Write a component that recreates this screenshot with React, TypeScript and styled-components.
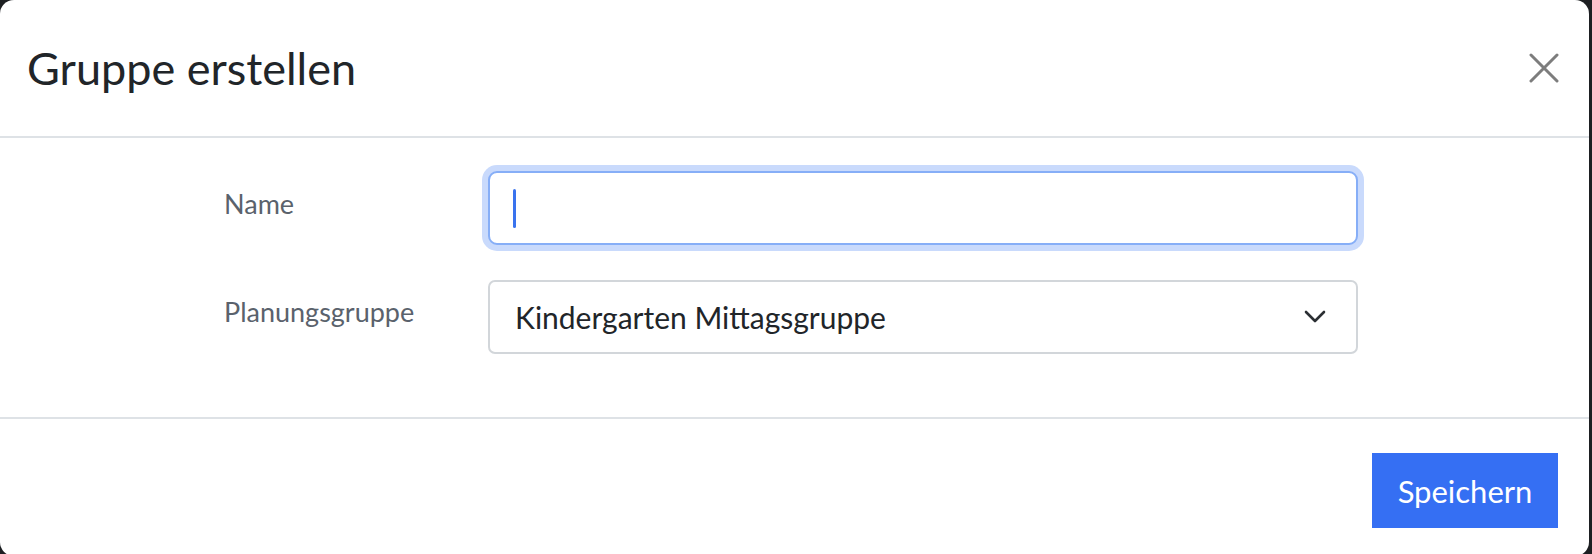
import React from "react";
import styled, { createGlobalStyle } from "styled-components";

const GlobalStyle = createGlobalStyle`
  html, body {
    margin: 0;
    padding: 0;
    background: #1d1f22;
    overflow: hidden;
  }
  * {
    box-sizing: border-box;
  }
`;

const FONT = `"Lato", "Noto Sans", "Liberation Sans", sans-serif`;

export default function App() {
  return (
    <>
      <GlobalStyle />
      <Modal>
        <Header>
          <Title>Gruppe erstellen</Title>
          <CloseButton aria-label="Schließen">
            <svg width="30" height="30" viewBox="0 0 30 30">
              <path d="M2 2 L28 28 M28 2 L2 28" stroke="#7d7d7d" strokeWidth="3" strokeLinecap="round" />
            </svg>
          </CloseButton>
        </Header>

        <Body>
          <Form>
            <Label htmlFor="name" $offset={-5}>Name</Label>
            <InputWrap>
              <Input id="name" />
              <Caret />
            </InputWrap>

            <Label htmlFor="planung" $offset={-6}>Planungsgruppe</Label>
            <SelectBox id="planung">
              <span>Kindergarten Mittagsgruppe</span>
              <svg width="22" height="14" viewBox="0 0 22 14">
                <path d="M2 2 L11 11 L20 2" fill="none" stroke="#2b2f33" strokeWidth="2.6" strokeLinecap="round" strokeLinejoin="round" />
              </svg>
            </SelectBox>
          </Form>
        </Body>

        <Footer>
          <SaveButton>Speichern</SaveButton>
        </Footer>
      </Modal>
    </>
  );
}

const Modal = styled.div`
  width: 1589px;
  height: 556px;
  background: #ffffff;
  border-radius: 14px;
  display: flex;
  flex-direction: column;
  font-family: ${FONT};
  overflow: hidden;
`;

const Header = styled.div`
  height: 138px;
  display: flex;
  align-items: center;
  justify-content: space-between;
  padding: 0 30px 0 27px;
  border-bottom: 2px solid #dee2e6;
`;

const Title = styled.h1`
  margin: 0;
  font-size: 45px;
  font-weight: 400;
  color: #212529;
`;

const CloseButton = styled.button`
  border: none;
  background: transparent;
  padding: 0;
  display: flex;
  cursor: pointer;
`;

const Body = styled.div`
  padding: 33px 0 63px 224px;
  border-bottom: 2px solid #dee2e6;
`;

const Form = styled.div`
  display: grid;
  grid-template-columns: 264px 870px;
  grid-auto-rows: 74px;
  row-gap: 35px;
  align-items: center;
`;

const Label = styled.label<{ $offset?: number }>`
  font-size: 27px;
  color: #5a626c;
  position: relative;
  top: ${(p) => p.$offset ?? 0}px;
`;

const InputWrap = styled.div`
  position: relative;
  height: 74px;
`;

const Input = styled.input`
  width: 100%;
  height: 100%;
  border: 2px solid #86aef7;
  border-radius: 9px;
  box-shadow: 0 0 0 6px #c9dafc;
  outline: none;
  font-family: ${FONT};
  font-size: 32px;
  padding: 0 24px;
  background: #fff;
`;

const Caret = styled.span`
  position: absolute;
  left: 25px;
  top: 18px;
  width: 3px;
  height: 39px;
  border-radius: 2px;
  background: #3a73ee;
`;

const SelectBox = styled.div`
  height: 74px;
  border: 2px solid #d2d6da;
  border-radius: 7px;
  display: flex;
  align-items: center;
  justify-content: space-between;
  padding: 0 30px 0 25px;
  font-size: 30px;
  color: #212529;
`;

const Footer = styled.div`
  flex: 1;
  display: flex;
  justify-content: flex-end;
  align-items: flex-start;
  padding: 34px 31px 0 0;
`;

const SaveButton = styled.button`
  width: 186px;
  height: 75px;
  border: none;
  border-radius: 0;
  background: #356ff3;
  color: #ffffff;
  font-family: ${FONT};
  font-size: 31px;
  cursor: pointer;
`;
